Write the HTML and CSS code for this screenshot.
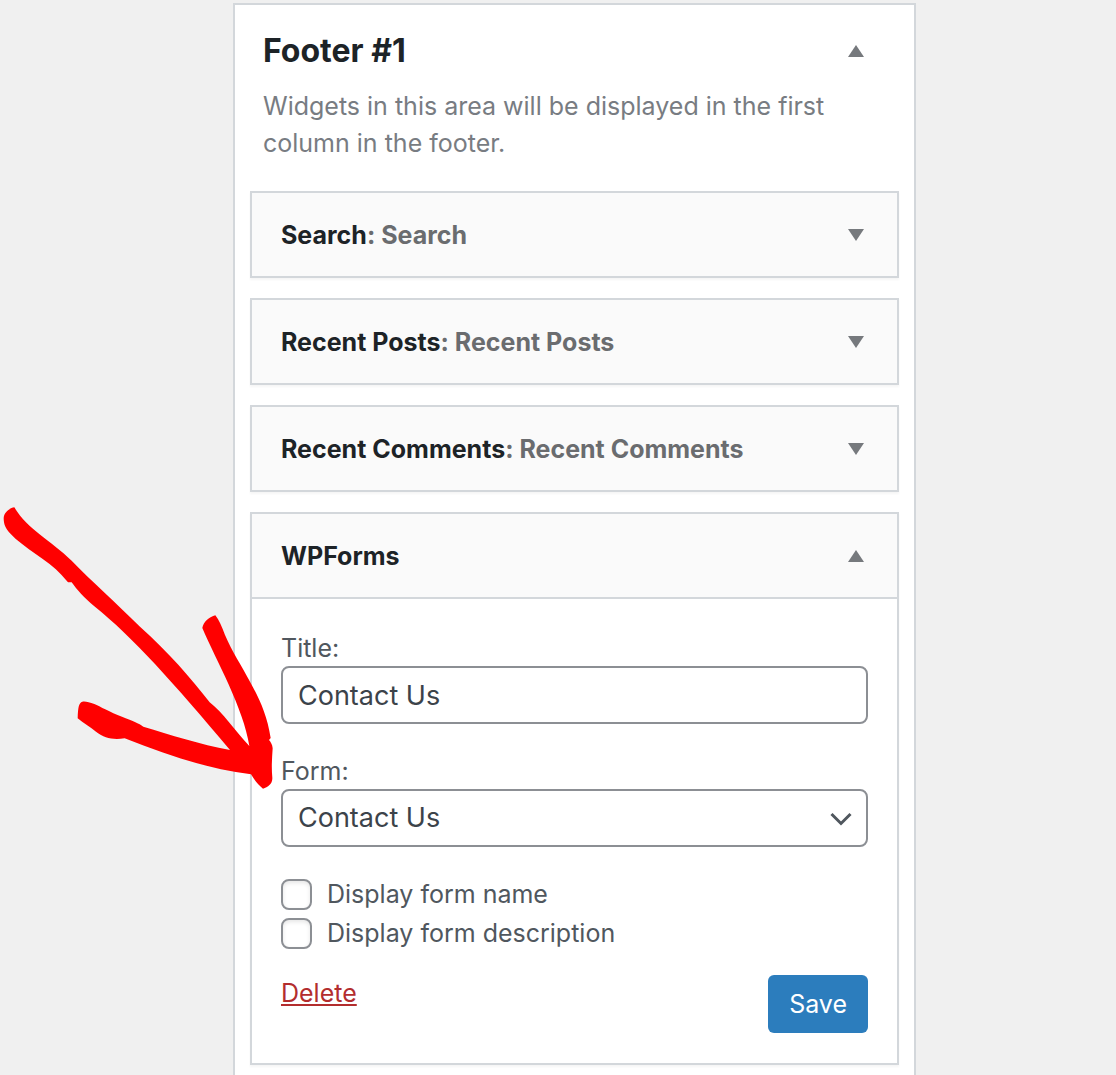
FILE: index.html
```html
<!DOCTYPE html>
<html lang="en">

<head>
    <meta charset="UTF-8">
    <meta name="viewport" content="width=device-width, initial-scale=1">
    <title>Widgets</title>
    <link rel="stylesheet" href="styles.css">
</head>

<body>
    <main class="page">
        <section class="sidebar">
            <div class="sidebar-name">
                <h2>Footer #1</h2>
                <button type="button" class="toggle" aria-label="Collapse Footer #1" aria-expanded="true"></button>
            </div>
            <p class="description">Widgets in this area will be displayed in the first column in the footer.</p>

            <div class="widgets">
                <div class="widget">
                    <div class="widget-top">
                        <h3>Search<span>: Search</span></h3>
                        <button type="button" class="toggle" aria-label="Edit Search" aria-expanded="false"></button>
                    </div>
                </div>
                <div class="widget">
                    <div class="widget-top">
                        <h3>Recent Posts<span>: Recent Posts</span></h3>
                        <button type="button" class="toggle" aria-label="Edit Recent Posts" aria-expanded="false"></button>
                    </div>
                </div>
                <div class="widget">
                    <div class="widget-top">
                        <h3>Recent Comments<span>: Recent Comments</span></h3>
                        <button type="button" class="toggle" aria-label="Edit Recent Comments" aria-expanded="false"></button>
                    </div>
                </div>
                <div class="widget">
                    <div class="widget-top">
                        <h3>WPForms</h3>
                        <button type="button" class="toggle" aria-label="Edit WPForms" aria-expanded="true"></button>
                    </div>
                    <form class="widget-inside">
                        <div class="field">
                            <label for="title">Title:</label>
                            <input type="text" id="title" value="Contact Us">
                        </div>
                        <div class="field">
                            <label for="form">Form:</label>
                            <div class="select">
                                <select id="form">
                                    <option>Contact Us</option>
                                </select>
                                <svg viewBox="0 0 22 14" aria-hidden="true"><path d="M1.5 2 11 11.5 20.5 2"/></svg>
                            </div>
                        </div>
                        <div class="checks">
                            <label><input type="checkbox"> Display form name</label>
                            <label><input type="checkbox"> Display form description</label>
                        </div>
                        <div class="actions">
                            <a href="#" class="delete">Delete</a>
                            <button type="button" class="save">Save</button>
                        </div>
                    </form>
                </div>
            </div>
        </section>

        <!-- hand-drawn arrow pointing at the form fields -->
        <svg class="arrow" viewBox="0 0 870 900" aria-hidden="true">
            <path d="M43 22C32 23 12 36 11 54C11 74 17 85 30 100C70 144 144 180 184 224L204 247L215 247C231 270 251 292 283 319C400 413 520 548 690 750C600 733 510 704 430 680C418 670 396 662 366 650C330 637 300 619 283 612C267 606 255 603 247 605C237 609 234 619 233 655C250 669 271 682 288 695C314 714 336 720 374 715C500 765 617 805 753 823C763 840 775 855 789 866C804 861 818 852 817 833C814 800 816 775 818 745C817 733 812 726 807 720L812 714C801 644 778 596 750 545C724 496 696 455 675 405C665 379 657 360 646 346C629 350 610 366 607 384C648 480 731 625 748 738C709 697 668 637 629 607C571 532 508 459 420 380C354 314 271 240 215 182C150 119 81 87 43 22Z"/>
        </svg>
    </main>
</body>

</html>
```
FILE: styles.css
```css
* {
    box-sizing: border-box;
}

body {
    margin: 0;
    background: #f0f0f0;
    color: #50575e;
    font: 25px/36px Inter, "Liberation Sans", sans-serif;
}

h2, h3, p {
    margin: 0;
}

.page {
    position: relative;
    min-height: 100vh;
    padding: 3px 200px 0 233px;
}

.sidebar {
    min-height: calc(100vh - 3px);
    padding: 0 15px 8px;
    border: 2px solid #d3d7db;
    border-bottom: 0;
    background: #fff;
}

.sidebar-name {
    display: flex;
    align-items: center;
    justify-content: space-between;
    padding: 26px 35px 17px 13px;
}

h2 {
    color: #1d2327;
    font-size: 32px;
    font-weight: 650;
    line-height: 40px;
}

.description {
    margin: 0 13px 29px;
    color: #787c82;
    line-height: 37px;
}

.toggle {
    display: flex;
    padding: 0;
    border: 0;
    background: none;
}

.toggle::before {
    content: "";
    border: 8px solid transparent;
    border-top: 12px solid #76797d;
    border-bottom: 0;
}

.toggle[aria-expanded="true"]::before {
    border-top: 0;
    border-bottom: 12px solid #76797d;
}

.widgets {
    display: grid;
    gap: 20px;
}

.widget {
    border: 2px solid #d3d7db;
    background: #fff;
    box-shadow: 0 2px 2px rgba(0, 0, 0, .04);
}

.widget-top {
    display: flex;
    align-items: center;
    justify-content: space-between;
    height: 83px;
    padding: 0 33px 0 29px;
    background: #fafafa;
}

h3 {
    color: #1d2327;
    font-size: 25px;
    font-weight: 650;
}

h3 span {
    color: #6a6c6f;
}

.widget-inside {
    padding: 31px 29px 30px;
    border-top: 2px solid #d3d7db;
}

.field {
    margin-bottom: 29px;
}

.field > label {
    display: block;
}

input[type="text"], select {
    display: block;
    width: 100%;
    height: 58px;
    padding: 0 15px;
    border: 2px solid #8c8f94;
    border-radius: 8px;
    background: #fff;
    color: #3c434a;
    font: 27px/36px Inter, "Liberation Sans", sans-serif;
}

select {
    appearance: none;
}

.select {
    position: relative;
}

.select svg {
    position: absolute;
    top: 23px;
    right: 16px;
    width: 22px;
    height: 14px;
    fill: none;
    stroke: #50575e;
    stroke-width: 3;
    pointer-events: none;
}

.checks {
    display: grid;
    gap: 3px;
}

.checks label {
    display: flex;
    align-items: center;
    gap: 15px;
}

input[type="checkbox"] {
    appearance: none;
    width: 31px;
    height: 31px;
    margin: 0;
    border: 2px solid #8c8f94;
    border-radius: 8px;
    background: #fff;
    box-shadow: inset 0 2px 4px rgba(0, 0, 0, .1);
}

input[type="checkbox"]:checked {
    background: #2c7dbd;
}

.actions {
    display: flex;
    align-items: flex-start;
    justify-content: space-between;
    margin-top: 24px;
}

.delete {
    color: #b32d2e;
}

.save {
    height: 58px;
    padding: 0 21px;
    border: 0;
    border-radius: 6px;
    background: #2c7dbd;
    color: #fff;
    font: 25px/36px Inter, "Liberation Sans", sans-serif;
}

.arrow {
    position: absolute;
    top: 500px;
    left: 0;
    width: 290px;
    height: 300px;
    fill: #f00;
    pointer-events: none;
}
```
